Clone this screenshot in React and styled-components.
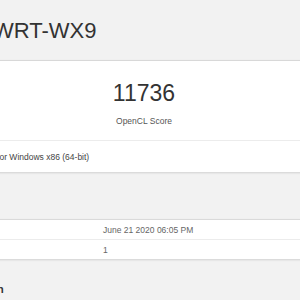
import React from "react";
import styled, { createGlobalStyle } from "styled-components";

const Global = createGlobalStyle`
  html, body { margin: 0; padding: 0; background: #f2f2f2; overflow: hidden; }
  body { font-family: "Liberation Sans", Arial, Helvetica, sans-serif; color: #333; }
`;

const Page = styled.div`
  width: 528px;
  margin-left: -120px;
`;

const Header = styled.header`
  height: 60px;
  box-sizing: border-box;
  padding: 20px 0 0 113px;
`;

const Title = styled.h1`
  margin: 0;
  font-size: 22px;
  line-height: 21px;
  font-weight: 400;
  color: #333;
  white-space: nowrap;
`;

const Card = styled.section`
  background: #fff;
  border-top: 1px solid #d8d8d8;
  box-shadow: 0 1px 2px rgba(0, 0, 0, 0.14);
`;

const ScoreBlock = styled.div`
  height: 79px;
  box-sizing: border-box;
  padding-top: 21px;
  display: flex;
  flex-direction: column;
  align-items: center;
`;

const Score = styled.div`
  font-size: 23px;
  line-height: 23px;
  color: #333;
`;

const ScoreLabel = styled.div`
  margin-top: 11px;
  font-size: 8.5px;
  line-height: 10px;
  color: #555;
`;

const VersionRow = styled.div`
  height: 31px;
  border-top: 1px solid #ececec;
  padding-left: 24px;
  display: flex;
  align-items: center;
  font-size: 8.5px;
  color: #444;
  white-space: nowrap;
`;

const Heading = styled.h2`
  margin: ${(p) => p.$top}px 0 0;
  padding-left: 21px;
  font-size: 11px;
  line-height: 13px;
  font-weight: 700;
  color: #333;
  white-space: nowrap;
`;

const Table = styled.div`
  margin-top: 9px;
  background: #fff;
  border-top: 1px solid #dadada;
  box-shadow: 0 1px 2px rgba(0, 0, 0, 0.14);
`;

const Row = styled.div`
  display: grid;
  grid-template-columns: 199px 1fr;
  padding-left: 24px;
  height: 19px;
  align-items: center;
  font-size: 8.5px;
  line-height: 10px;
  border-bottom: ${(p) => (p.$last ? "none" : "1px solid #ececec")};
  white-space: nowrap;
`;

const Name = styled.span`
  color: #333;
`;

const Value = styled.span`
  color: #666;
`;

export default function App() {
  return (
    <>
      <Global />
      <Page>
        <Header>
          <Title>WRT-WX9</Title>
        </Header>
        <Card>
          <ScoreBlock>
            <Score>11736</Score>
            <ScoreLabel>OpenCL Score</ScoreLabel>
          </ScoreBlock>
          <VersionRow>Geekbench 5.2.0 Tryout for Windows x86 (64-bit)</VersionRow>
        </Card>
        <Heading $top={25}>Result Information</Heading>
        <Table>
          <Row>
            <Name>Upload Date</Name>
            <Value>June 21 2020 06:05 PM</Value>
          </Row>
          <Row $last>
            <Name>Views</Name>
            <Value>1</Value>
          </Row>
        </Table>
        <Heading $top={24}>System Information</Heading>
      </Page>
    </>
  );
}
